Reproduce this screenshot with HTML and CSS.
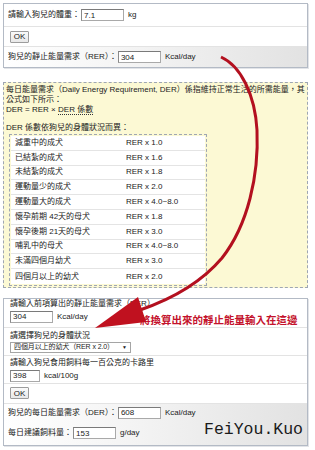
FILE: index.html
```html
<!DOCTYPE html>
<html lang="zh-Hant">
<head>
    <meta charset="UTF-8">
    <meta name="viewport" content="width=device-width, initial-scale=1.0">
    <title>狗兒每日能量需求</title>
    <link rel="stylesheet" href="styles.css">
</head>
<body>
    <div class="page">
        <!-- RER -->
        <div class="panel">
            <div class="row first">
                <label>請輸入狗兒的體重：</label>
                <input class="num" value="7.1">
                <span class="unit">kg</span>
            </div>
            <div class="row">
                <button class="ok">OK</button>
            </div>
            <div class="row shade">
                <label>狗兒的靜止能量需求（RER）：</label>
                <input class="num" value="304">
                <span class="unit">Kcal/day</span>
            </div>
        </div>

        <!-- DER info -->
        <div class="info">
            <p class="line">每日能量需求（Daily Energy Requirement, DER）係指維持正常生活的所需能量，其</p>
            <p class="line">公式如下所示：</p>
            <p class="line">DER = RER × <span class="term">DER 係數</span></p>
            <p class="line gap">DER 係數依狗兒的身體狀況而異：</p>
            <div class="factors">
                <div class="factor"><span>減重中的成犬</span><span>RER x 1.0</span></div>
                <div class="factor"><span>已結紮的成犬</span><span>RER x 1.6</span></div>
                <div class="factor"><span>未結紮的成犬</span><span>RER x 1.8</span></div>
                <div class="factor"><span>運動量少的成犬</span><span>RER x 2.0</span></div>
                <div class="factor"><span>運動量大的成犬</span><span>RER x 4.0~8.0</span></div>
                <div class="factor"><span>懷孕前期 42天的母犬</span><span>RER x 1.8</span></div>
                <div class="factor"><span>懷孕後期 21天的母犬</span><span>RER x 3.0</span></div>
                <div class="factor"><span>哺乳中的母犬</span><span>RER x 4.0~8.0</span></div>
                <div class="factor"><span>未滿四個月幼犬</span><span>RER x 3.0</span></div>
                <div class="factor"><span>四個月以上的幼犬</span><span>RER x 2.0</span></div>
            </div>
        </div>

        <!-- DER -->
        <div class="panel lower">
            <div class="row stack r1">
                <label>請輸入前項算出的靜止能量需求（RER）</label>
                <div class="field">
                    <input class="num" value="304">
                    <span class="unit">Kcal/day</span>
                </div>
            </div>
            <div class="row stack r2">
                <label>請選擇狗兒的身體狀況</label>
                <div class="select"><span class="choice">四個月以上的幼犬（RER x 2.0）</span><span class="caret">▼</span></div>
            </div>
            <div class="row stack r3">
                <label>請輸入狗兒食用飼料每一百公克的卡路里</label>
                <div class="field">
                    <input class="num short" value="398">
                    <span class="unit">kcal/100g</span>
                </div>
            </div>
            <div class="row">
                <button class="ok">OK</button>
            </div>
            <div class="shade result">
                <div class="row r5">
                    <label>狗兒的每日能量需求（DER）：</label>
                    <input class="num" value="608">
                    <span class="unit">Kcal/day</span>
                </div>
                <div class="row r6">
                    <label>每日建議飼料量：</label>
                    <input class="num" value="153">
                    <span class="unit">g/day</span>
                </div>
            </div>
        </div>

        <div class="note">將換算出來的靜止能量輸入在這邊</div>
        <div class="sign">FeiYou.Kuo</div>

        <svg class="arrow" width="315" height="450" viewBox="0 0 315 450">
            <path d="M221,57 C241,66 255,95 257,130 C259,175 248,225 222,258 C200,284 172,299 140,310" fill="none" stroke="#b3101f" stroke-width="3"/>
            <polygon points="95,328 138,297 146,322" fill="#c0111f"/>
        </svg>
    </div>
</body>
</html>
```

FILE: styles.css
```css
* {
    margin: 0;
    padding: 0;
    box-sizing: border-box;
}

body {
    background-color: #ffffff;
    color: #222222;
    font-family: "Liberation Sans", "Noto Sans CJK TC", sans-serif;
    font-size: 8px;
    line-height: 10px;
}

.page {
    position: relative;
    width: 315px;
    height: 450px;
    padding: 3px;
}

.panel {
    width: 305px;
    border: 1px solid #b3bac5;
    box-shadow: 1px 1px 0 #e2e4e8;
}

.row {
    display: flex;
    align-items: center;
    height: 20px;
    padding-left: 4px;
    border-bottom: 1px solid #e3e3e3;
}

.row.first {
    height: 23px;
}

.panel > .row:last-child {
    border-bottom: none;
}

.shade {
    background: linear-gradient(90deg, #ffffff 0%, #f3f3f3 45%, #e2e2e2 100%);
}

label {
    white-space: nowrap;
}

.num {
    width: 43px;
    height: 12px;
    margin-left: 1px;
    padding: 0 2px;
    border: 1px solid #a9a9a9;
    border-top-color: #7a7a7a;
    border-left-color: #8a8a8a;
    font-family: "Liberation Sans", sans-serif;
    font-size: 8px;
    color: #222222;
    background: #ffffff;
}

.num.short {
    width: 30px;
}

.unit {
    margin-left: 4px;
}

.ok {
    width: 19px;
    height: 12px;
    margin-left: 2px;
    border: 1px solid #9c9c9c;
    border-radius: 1px;
    background: linear-gradient(#fafafa, #e8e8e8);
    font-family: "Liberation Sans", sans-serif;
    font-size: 8px;
    color: #222222;
}

/* info box */
.info {
    width: 305px;
    margin-top: 14px;
    padding: 2px 2px 1px;
    border: 1px dashed #9ea6b3;
    background-color: #fcf9d4;
}

.line {
    white-space: nowrap;
}

.line.gap {
    margin-top: 8px;
}

.term {
    border-bottom: 1px dotted #333333;
}

.factors {
    width: 198px;
    margin: 1px 0 0 3px;
    padding: 1px;
    border: 1px dashed #9ea6b3;
}

.factor {
    display: grid;
    grid-template-columns: 111px 1fr;
    align-items: center;
    height: 14.8px;
    padding-left: 4px;
    background-color: #ffffff;
    border-bottom: 1px solid #e4e4e4;
}

.factor:last-child {
    border-bottom: none;
}

/* lower panel */
.lower {
    margin-top: 10px;
}

.row.stack {
    flex-direction: column;
    align-items: flex-start;
    justify-content: flex-start;
    padding-left: 6px;
}

.r1 {
    height: 29px;
}

.r2 {
    height: 28px;
    padding-top: 3px;
}

.r3 {
    height: 28px;
    padding-top: 2px;
}

.field {
    display: flex;
    align-items: center;
    margin-top: 2px;
}

.field .num {
    margin-left: 0;
}

.select {
    display: flex;
    justify-content: space-between;
    align-items: center;
    width: 121px;
    height: 11px;
    margin-top: 1px;
    padding: 0 3px 0 3px;
    border: 1px solid #a5a5a5;
    background: #ffffff;
    white-space: nowrap;
    overflow: hidden;
}

.choice {
    font-size: 7px;
    letter-spacing: -0.1px;
}

.caret {
    font-size: 5px;
}

.row.r5 {
    height: 18px;
    border-bottom: none;
}

.row.r6 {
    height: 23px;
    border-bottom: none;
}

.note {
    position: absolute;
    left: 140px;
    top: 313px;
    font-family: "Noto Sans CJK TC", sans-serif;
    font-size: 10.5px;
    font-weight: bold;
    line-height: 14px;
    color: #c4122c;
    white-space: nowrap;
}

.sign {
    position: absolute;
    left: 204px;
    top: 421px;
    font-family: "Liberation Mono", monospace;
    font-size: 16.5px;
    line-height: 18px;
    color: #1a1a1a;
}

.arrow {
    position: absolute;
    top: 0;
    left: 0;
    pointer-events: none;
}
```
